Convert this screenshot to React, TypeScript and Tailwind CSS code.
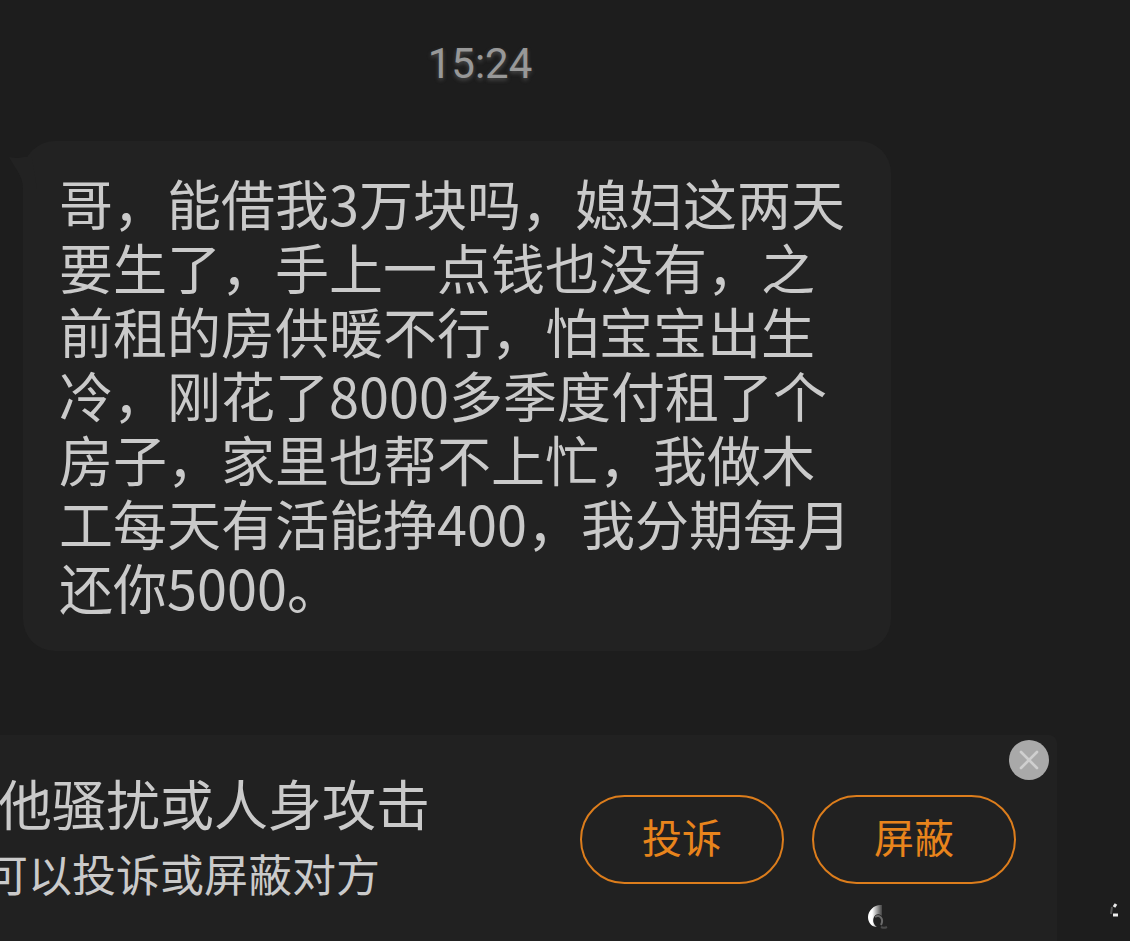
import { X } from 'lucide-react';

const MESSAGE =
  '哥，能借我3万块吗，媳妇这两天要生了，手上一点钱也没有，之前租的房供暖不行，怕宝宝出生冷，刚花了8000多季度付租了个房子，家里也帮不上忙，我做木工每天有活能挣400，我分期每月还你5000。';

export default function App() {
  return (
    <main className="flex min-h-screen flex-col overflow-hidden bg-[#1d1d1d] font-['Noto_Sans_CJK_SC',sans-serif] text-[#cacaca]">
      <div className="flex w-full max-w-[960px] justify-center pt-8">
        <time className="font-[Roboto,sans-serif] text-[42px] leading-[64px] text-[#989898] [text-shadow:0_2px_4px_rgba(150,150,150,0.4)]">
          15:24
        </time>
      </div>

      <MessageBubble text={MESSAGE} />
      <ReportBar />
    </main>
  );
}

function MessageBubble({ text }: { text: string }) {
  return (
    <div className="relative mt-[45px] ml-[23px] max-w-[868px] rounded-[32px] bg-[#222222] px-9 pt-[30px] pb-8">
      <BubbleTail />
      <p className="text-[54px] leading-[64px]">{text}</p>
    </div>
  );
}

/** Prompt under a stranger's message, offering to report or block them. */
function ReportBar() {
  return (
    <section className="relative mt-[84px] flex w-full max-w-[1057px] grow items-start justify-between rounded-tr-lg bg-[#212121] pr-[41px]">
      <div className="pt-8">
        <h2 className="-ml-0.5 text-[54px] leading-[72px]">他骚扰或人身攻击</h2>
        <p className="-ml-4 text-[44px] leading-[68px]">可以投诉或屏蔽对方</p>
      </div>
      <div className="flex gap-7 pt-[60px]">
        <PillButton label="投诉" />
        <PillButton label="屏蔽" />
      </div>
      <button
        type="button"
        aria-label="关闭"
        className="absolute top-[5px] right-2 flex h-10 w-10 items-center justify-center rounded-full bg-[#a9a9a9] text-[#cfcfcf]"
      >
        <X className="h-8 w-8" strokeWidth={2} />
      </button>
      <Watermark />
    </section>
  );
}

function PillButton({ label }: { label: string }) {
  return (
    <button
      type="button"
      className="h-[89px] w-[204px] rounded-full border-2 border-[#dc7d1c] pb-2 text-[40px] leading-[48px] text-[#e8841c]"
    >
      {label}
    </button>
  );
}

function BubbleTail() {
  return (
    <svg
      viewBox="0 0 28 32"
      className="absolute top-4 -left-3.5 h-8 w-7"
      fill="#222222"
      aria-hidden="true"
    >
      <path d="M0 0C8 2 16 1 22-4L28 32H14C14 18 6 12 0 0z" />
    </svg>
  );
}

function Watermark() {
  return (
    <svg
      viewBox="0 0 256 32"
      className="absolute -right-[66px] bottom-2 h-8 w-64"
      fill="none"
      aria-hidden="true"
    >
      <defs>
        <linearGradient id="fade" x1="0" x2="1">
          <stop offset="0.3" stopColor="#ffffff" />
          <stop offset="1" stopColor="#ffffff" stopOpacity="0.15" />
        </linearGradient>
      </defs>
      <path
        d="M15 4C8 3 1 9 1 16c0 6 4 10 9 10-3-2-5-6-3-10 1-3 5-4 8-1z"
        fill="url(#fade)"
      />
      <path d="M8 16c5-3 9 2 6 8" stroke="#6a6a6a" strokeWidth="2" />
      <path d="M14 26c2 1 4 1 6 0" stroke="#4a4a4a" strokeWidth="2" />
      <path d="M249 3l-2 3" stroke="#e8e8e8" strokeWidth="3" />
      <path d="M245 6l-1 7" stroke="#555555" strokeWidth="2" />
      <path d="M246 14h5" stroke="#eeeeee" strokeWidth="3" />
    </svg>
  );
}
